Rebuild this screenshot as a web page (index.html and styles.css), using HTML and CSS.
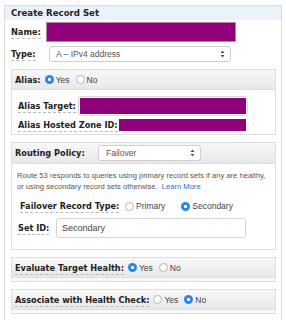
FILE: index.html
```html
<!DOCTYPE html>
<html lang="en">
<head>
  <meta charset="UTF-8" />
  <title>Create Record Set</title>
  <link rel="stylesheet" href="styles.css">
</head>
<body>
  <div class="panel">
    <div class="panel-head">Create Record Set</div>
    <div class="panel-body">
      <div class="row row-name">
        <label class="lbl lbl-name"><span class="tip">Name:</span></label>
        <div class="redact redact-name"></div>
      </div>
      <div class="row row-type">
        <label class="lbl lbl-type"><span class="tip">Type:</span></label>
        <div class="select select-type">
          <span>A – IPv4 address</span>
          <svg class="arrows" width="5" height="8" viewBox="0 0 5 8"><path d="M2.5 0.5 L4.5 3 L0.5 3 Z M2.5 7.5 L4.5 5 L0.5 5 Z" fill="#555"/></svg>
        </div>
      </div>

      <div class="section">
        <div class="section-head">
          <span class="head-lbl">Alias:</span>
          <span class="radio on"></span><span class="opt">Yes</span>
          <span class="radio"></span><span class="opt">No</span>
        </div>
        <div class="section-body alias-body">
          <div class="row row-target">
            <label class="lbl lbl-target"><span class="tip">Alias Target:</span></label>
            <div class="redact-wrap"><div class="redact redact-target"></div></div>
          </div>
          <div class="row row-zone">
            <label class="lbl"><span class="tip">Alias Hosted Zone ID:</span></label>
            <div class="redact redact-zone"></div>
          </div>
        </div>
      </div>

      <div class="section">
        <div class="section-head head-routing">
          <span class="head-lbl lbl-routing">Routing Policy:</span>
          <div class="select select-policy">
            <span>Failover</span>
            <svg class="arrows" width="5" height="8" viewBox="0 0 5 8"><path d="M2.5 0.5 L4.5 3 L0.5 3 Z M2.5 7.5 L4.5 5 L0.5 5 Z" fill="#555"/></svg>
          </div>
        </div>
        <div class="section-body routing-body">
          <p class="desc">Route 53 responds to queries using primary record sets if any are healthy,<br>or using secondary record sets otherwise.&nbsp; <a class="link">Learn More</a></p>
          <div class="row row-failover">
            <label class="lbl lbl-failover"><span class="tip">Failover Record Type:</span></label>
            <span class="radio"></span><span class="opt opt-wide">Primary</span>
            <span class="radio on"></span><span class="opt">Secondary</span>
          </div>
          <div class="row row-setid">
            <label class="lbl lbl-setid"><span class="tip">Set ID:</span></label>
            <div class="text-input">Secondary</div>
          </div>
        </div>
      </div>

      <div class="section">
        <div class="section-head">
          <span class="head-lbl"><span class="tip">Evaluate Target Health:</span></span>
          <span class="radio on"></span><span class="opt">Yes</span>
          <span class="radio"></span><span class="opt">No</span>
        </div>
        <div class="section-foot"></div>
      </div>

      <div class="section">
        <div class="section-head">
          <span class="head-lbl"><span class="tip">Associate with Health Check:</span></span>
          <span class="radio"></span><span class="opt">Yes</span>
          <span class="radio on"></span><span class="opt">No</span>
        </div>
        <div class="section-foot"></div>
      </div>
    </div>
  </div>
</body>
</html>
```

FILE: styles.css
```css
* {
  margin: 0;
  padding: 0;
  box-sizing: border-box;
}

body {
  background: #ffffff;
  font-family: 'Liberation Sans', Arial, sans-serif;
  color: #333;
  padding: 5px 0 0 4px;
  overflow: hidden;
}

.panel {
  width: 278px;
  border: 1px solid #dcdcdc;
  border-bottom: none;
  min-height: 330px;
}

.panel-head {
  background: #eaf2fc;
  height: 14px;
  padding: 2px 0 0 6px;
  font-family: 'DejaVu Sans', Verdana, sans-serif;
  font-weight: bold;
  font-size: 8.6px;
  color: #222;
}

.panel-body {
  padding: 2px 5px 0 6px;
}

.row {
  display: flex;
  align-items: center;
}

.lbl,
.head-lbl {
  font-family: 'DejaVu Sans', Verdana, sans-serif;
  font-weight: bold;
  font-size: 8.2px;
  color: #222;
  white-space: nowrap;
}

.tip {
  border-bottom: 1px dashed #bbb;
  padding-bottom: 1px;
}

.row-name {
  height: 20px;
}

.lbl-name { width: 35px; }

.redact {
  background: #900079;
}

.redact-name {
  width: 190px;
  height: 20px;
  border: 1px solid #b880ab;
}

.row-type {
  margin-top: 4px;
  height: 16px;
}

.lbl-type { width: 38px; }

.select {
  display: flex;
  align-items: center;
  justify-content: space-between;
  height: 16px;
  border: 1px solid #cfcfcf;
  border-radius: 3px;
  background: #fff;
  font-size: 8.5px;
  color: #555;
  padding: 0 5px 0 6px;
}

.select-type { width: 182px; }

.section {
  margin-top: 7px;
  width: 265px;
  border: 1px solid #dedede;
}

.section-head {
  display: flex;
  align-items: center;
  height: 20px;
  padding-left: 3px;
  background: linear-gradient(#f8f8f8, #e8e8e8);
  border-bottom: 1px solid #dedede;
}

.head-lbl {
  margin-right: 4px;
}

.radio {
  width: 9px;
  height: 9px;
  border-radius: 50%;
  border: 1px solid #b5b5b5;
  background: #fff;
  flex-shrink: 0;
}

.radio.on {
  border: none;
  background: radial-gradient(circle, #fff 0 1.3px, #2a86e8 1.8px);
}

.opt {
  font-size: 8.5px;
  color: #444;
  margin: 0 6px 0 2px;
}

.opt-wide {
  margin-right: 16px;
}

.section-body {
  background: #fff;
}

.alias-body {
  padding: 5px 0 3px 6px;
  height: 44px;
}

.row-target {
  height: 21px;
}

.lbl-target { width: 60px; }

.redact-wrap {
  border: 1px solid #d8d8d8;
  border-radius: 3px;
  padding: 1px;
}

.redact-target {
  width: 166px;
  height: 16px;
}

.row-zone {
  margin-top: 2px;
  height: 13px;
}

.row-zone .lbl { width: 101px; }

.redact-zone {
  width: 127px;
  height: 12px;
}

.head-routing {
  height: 21px;
}

.lbl-routing {
  width: 79px;
}

.select-policy {
  width: 103px;
  padding-left: 7px;
}

.routing-body {
  padding: 6px 6px 5px 5px;
  height: 85px;
}

.desc {
  font-size: 7.6px;
  line-height: 11px;
  color: #555;
  white-space: nowrap;
}

.link {
  color: #1e6ec8;
}

.row-failover {
  margin-top: 9px;
  padding-left: 3px;
}

.lbl-failover { width: 105px; }

.row-setid {
  margin-top: 7px;
  padding-left: 1px;
}

.lbl-setid { width: 38px; }

.text-input {
  width: 190px;
  height: 20px;
  border: 1px solid #d5d5d5;
  border-radius: 3px;
  font-size: 9px;
  color: #444;
  padding: 4px 0 0 5px;
}

.section-foot {
  height: 3px;
  background: #f9f9f9;
}
```
